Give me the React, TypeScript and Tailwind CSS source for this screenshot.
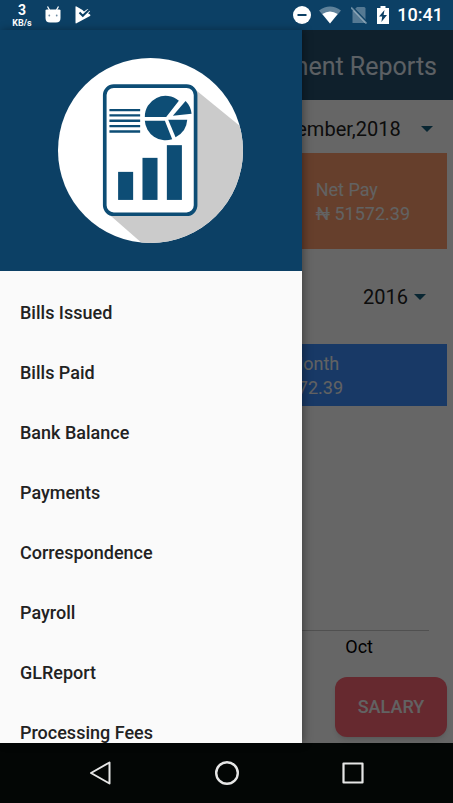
const menuItems = [
    "Bills Issued",
    "Bills Paid",
    "Bank Balance",
    "Payments",
    "Correspondence",
    "Payroll",
    "GLReport",
    "Processing Fees",
];

type AmountProps = {
    label: string;
    value: string;
};

function Amount({label, value}: AmountProps) {
    return (
        <div className="pt-0.5 text-lg leading-6 text-[#f4f4f4]">
            <p>{label}</p>
            <p>₦ {value}</p>
        </div>
    );
}

type PickerProps = {
    label: string;
    option: string;
    className: string;
};

function Picker({label, option, className}: PickerProps) {
    return (
        <div className="flex items-center">
            <select aria-label={label} className={`appearance-none bg-transparent text-xl text-[#222222] ${className}`}>
                <option>{option}</option>
            </select>
            <svg viewBox="0 0 12 6" className="h-1.5 w-3 fill-[#17607e]" aria-hidden="true">
                <path d="M0 0h12L6 6z" />
            </svg>
        </div>
    );
}

function StatusBar() {
    return (
        <div className="flex h-[30px] shrink-0 items-center justify-between bg-[#0c4065] pr-2.5 pl-[11px] text-white">
            <div className="flex items-center">
                <div className="flex w-[22px] flex-col items-center font-bold">
                    <span className="text-sm leading-4">3</span>
                    <span className="text-[9px] leading-[10px]">KB/s</span>
                </div>
                <svg viewBox="0 0 16 18" className="ml-3 h-[18px] w-4" aria-hidden="true">
                    <path d="M2.5 0.5L4.5 4M13.5 0.5L11.5 4" stroke="#fff" strokeWidth="1.3" />
                    <path d="M0.5 4.5Q0.5 3.5 2 3.5H14Q15.5 3.5 15.5 4.5V12Q15.5 16.5 11 16.5H5Q0.5 16.5 0.5 12z" fill="#fff" />
                    <circle cx="4.3" cy="9.5" r="0.9" fill="#6f8ca3" />
                    <circle cx="11.7" cy="9.5" r="0.9" fill="#6f8ca3" />
                </svg>
                <svg viewBox="0 0 16 18" className="ml-3.5 h-[18px] w-4" aria-hidden="true">
                    <path d="M0.5 1Q0.5 0 1.5 0.5L7.5 4L9 5.5L12.5 3L15 5.5L13 7.2L15 8.5Q16 9.2 15 10L1.5 17.3Q0.5 17.8 0.5 16.5z" fill="#fff" />
                    <path d="M4.5 6.5L7.8 9.8L13.8 4" fill="none" stroke="#0c4065" strokeWidth="2" />
                </svg>
            </div>
            <div className="flex items-center">
                <svg viewBox="0 0 18 18" className="size-[18px]" aria-hidden="true">
                    <circle cx="9" cy="9" r="9" fill="#fff" />
                    <path d="M4.5 9h9" stroke="#0c4065" strokeWidth="2" />
                </svg>
                <svg viewBox="0 0 22 18" className="ml-2 h-[18px] w-[22px]" aria-hidden="true">
                    <path d="M0 4.5Q11 -3.5 22 4.5L11 17.5z" fill="#fff" fillOpacity="0.35" />
                    <path d="M3.3 8Q11 3 18.7 8L11 17.5z" fill="#fff" />
                </svg>
                <svg viewBox="0 0 16 18" className="ml-2.5 h-[18px] w-4" aria-hidden="true">
                    <path d="M6 1H13Q14.5 1 14.5 2.5V17H1.5V5.5z" fill="#fff" fillOpacity="0.3" />
                    <path d="M1.5 1.5L16.5 17" stroke="#0c4065" strokeWidth="2" />
                    <path d="M0 1.5L15.5 17.5" stroke="#fff" strokeOpacity="0.4" strokeWidth="1.8" />
                </svg>
                <svg viewBox="0 0 12 18" className="ml-2.5 h-[18px] w-3" aria-hidden="true">
                    <path d="M3.5 0H8.5V2H12V18H0V2H3.5z" fill="#fff" />
                    <path d="M7.5 4L2 10.5H5.2L4.4 16L10 9H6.6z" fill="#0c4065" />
                </svg>
                <span className="ml-2 text-lg font-medium">10:41</span>
            </div>
        </div>
    );
}

function ReportLogo() {
    return (
        <svg viewBox="27 25 554 554" className="size-[185px]" role="img" aria-label="Reports">
            <defs>
                <clipPath id="disc">
                    <circle cx="304" cy="302" r="277" />
                </clipPath>
            </defs>
            <circle cx="304" cy="302" r="277" fill="#fff" />
            <path d="M436 118L600 252V600H302L176 490z" fill="#cbcbcb" clipPath="url(#disc)" />
            <rect x="167" y="109" width="272" height="384" rx="27" fill="#fff" stroke="#0d4d75" strokeWidth="11" />
            <path d="M181 181H273M181 197H273M181 213H273M181 229H273M181 245H273" stroke="#0d4d75" strokeWidth="7" />
            <g fill="#0d4d75">
                <path d="M287 202A62 62 0 0 1 389 153L351 202z" />
                <path d="M287 213H347L369 268A62 62 0 0 1 287 213z" />
                <path d="M357 210H414A62 62 0 0 1 379 262z" />
                <path d="M371 198L409 154Q425 170 427 192z" />
                <rect x="207" y="366" width="45" height="84" />
                <rect x="280" y="324" width="45" height="126" />
                <rect x="353" y="286" width="45" height="164" />
            </g>
        </svg>
    );
}

function Drawer() {
    return (
        <aside className="absolute inset-y-0 left-0 z-20 w-2/3 overflow-hidden bg-[#fafafa] shadow-[2px_0_8px_rgba(0,0,0,0.35)]">
            <div className="flex justify-center bg-[#0c4065] py-7">
                <ReportLogo />
            </div>
            <nav className="pt-3">
                <ul>
                    {menuItems.map((item)=>(
                        <li key={item}>
                            <a href="#" className="flex h-15 items-center px-5 text-lg font-medium text-[#222222]">{item}</a>
                        </li>
                    ))}
                </ul>
            </nav>
        </aside>
    );
}

function Dashboard() {
    return (
        <main className="flex h-full flex-col bg-white">
            <header className="flex h-[70px] shrink-0 items-center justify-end bg-[#27506f] pt-1 pr-4">
                <h1 className="text-[25px] text-[#e6f0fa]">Payment Reports</h1>
            </header>
            <div className="flex h-[53px] shrink-0 items-center justify-end pt-1 pr-5">
                <Picker label="Month" option="September,2018" className="pr-5" />
            </div>
            <section className="mx-1.5 flex h-24 shrink-0 items-center justify-between bg-[#ff9f6e] pr-[37px] pl-6">
                <Amount label="Gross Pay" value="51572.39" />
                <Amount label="Net Pay" value="51572.39" />
            </section>
            <div className="flex h-[95px] shrink-0 items-center justify-end pt-px pr-[27px]">
                <Picker label="Year" option="2016" className="pr-1.5" />
            </div>
            <section className="mx-1.5 flex h-[62px] shrink-0 items-center justify-end bg-[#3c90ff] pr-[104px]">
                <Amount label="This Month" value="51572.39" />
            </section>
            <div className="mx-6 flex-1 border-b border-[#c8c8c8]" />
            <div className="flex h-[46px] shrink-0 justify-end pt-0.5 pr-20 text-lg text-black">
                <span>Oct</span>
            </div>
            <div className="flex shrink-0 justify-end pr-1.5 pb-1.5">
                <button className="h-15 w-28 rounded-xl bg-[#ff6676] text-lg font-medium text-[#f4f4f4] shadow-md">SALARY</button>
            </div>
        </main>
    );
}

function NavigationBar() {
    return (
        <div className="flex h-15 shrink-0 items-center justify-center gap-[102px] bg-[#030605]">
            <button aria-label="Back">
                <svg viewBox="0 0 24 24" className="size-6" fill="none" stroke="#e6e6e6" strokeWidth="2" strokeLinejoin="round">
                    <path d="M20.5 1.5V22.5L2 12z" />
                </svg>
            </button>
            <button aria-label="Home">
                <svg viewBox="0 0 24 24" className="size-6" fill="none" stroke="#e6e6e6" strokeWidth="2.4">
                    <circle cx="12" cy="12" r="10.8" />
                </svg>
            </button>
            <button aria-label="Recent apps">
                <svg viewBox="0 0 24 24" className="size-6" fill="none" stroke="#e6e6e6" strokeWidth="2.2" strokeLinejoin="round">
                    <rect x="2.5" y="2.5" width="19" height="19" />
                </svg>
            </button>
        </div>
    );
}

export default function App() {
    return (
        <div className="flex h-screen flex-col overflow-hidden font-['Roboto',sans-serif]">
            <StatusBar />
            <div className="relative min-h-0 flex-1">
                <Dashboard />
                <div className="absolute inset-0 z-10 bg-black/60" />
                <Drawer />
            </div>
            <NavigationBar />
        </div>
    );
}
